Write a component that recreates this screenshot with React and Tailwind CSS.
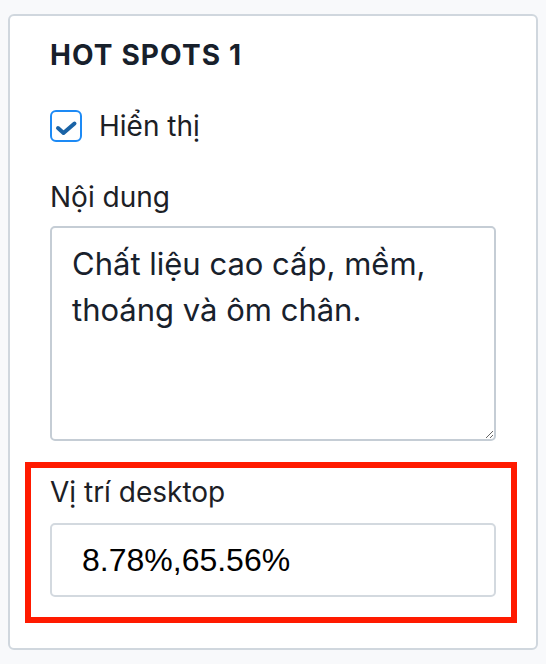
import { useState } from 'react';

const FONT = "font-['Inter','Noto_Sans',sans-serif]";

function CheckBox({ checked, onChange }) {
  return (
    <button
      type="button"
      onClick={() => onChange(!checked)}
      className="w-8 h-8 shrink-0 rounded-[6px] border-2 border-[#1d8af5] bg-white flex items-center justify-center"
    >
      {checked && (
        <svg width="32" height="32" viewBox="0 0 32 32" className="-m-[2px]">
          <path d="M8 18 L13.5 23 L24.5 13.5" fill="none" stroke="#1a63a6" strokeWidth="4" strokeLinecap="round" strokeLinejoin="round" />
        </svg>
      )}
    </button>
  );
}

export default function App() {
  const [visible, setVisible] = useState(true);
  const [content, setContent] = useState('Chất liệu cao cấp, mềm, thoáng và ôm chân.');
  const [position, setPosition] = useState('8.78%,65.56%');

  return (
    <div className={`min-h-screen bg-[#f8f9fb] pt-[14px] px-2 ${FONT}`}>
      <div className="bg-white border-2 border-[#d0d7de] rounded-[6px] px-10 pt-[22px] pb-[25px] h-[636px]">
        <h2 className="text-[28px] leading-[34px] font-bold tracking-[0.04em] text-[#17202b]">HOT SPOTS 1</h2>

        {/* hiển thị */}
        <label className="mt-[37px] flex items-center gap-[17px] cursor-pointer">
          <CheckBox checked={visible} onChange={setVisible} />
          <span className="text-[28px] leading-[34px] text-[#1c2025]">Hiển thị</span>
        </label>

        {/* nội dung */}
        <div className="mt-[37px]">
          <div className="text-[28px] leading-[34px] text-[#1c2025]">Nội dung</div>
          <textarea
            value={content}
            onChange={(e) => setContent(e.target.value)}
            className={`mt-3 block w-full h-[215px] border-2 border-[#c5cdd5] rounded-[5px] px-[20px] pt-[13px] text-[31px] leading-[46px] text-[#18212c] outline-none ${FONT}`}
          />
        </div>

        {/* vị trí desktop */}
        <div className="mt-[21px] -ml-[25px] -mr-[21px] border-[6px] border-[#ff1a00] pl-[19px] pr-[15px] pt-[7px] pb-[20px]">
          <div className="text-[28px] leading-[34px] text-[#1c2025]">Vị trí desktop</div>
          <input
            value={position}
            onChange={(e) => setPosition(e.target.value)}
            className="mt-[14px] block w-full h-[74px] border-2 border-[#d3d9df] rounded-[5px] pl-[30px] text-[32px] text-black outline-none font-['Liberation_Sans',Arial,sans-serif]"
          />
        </div>
      </div>
    </div>
  );
}
